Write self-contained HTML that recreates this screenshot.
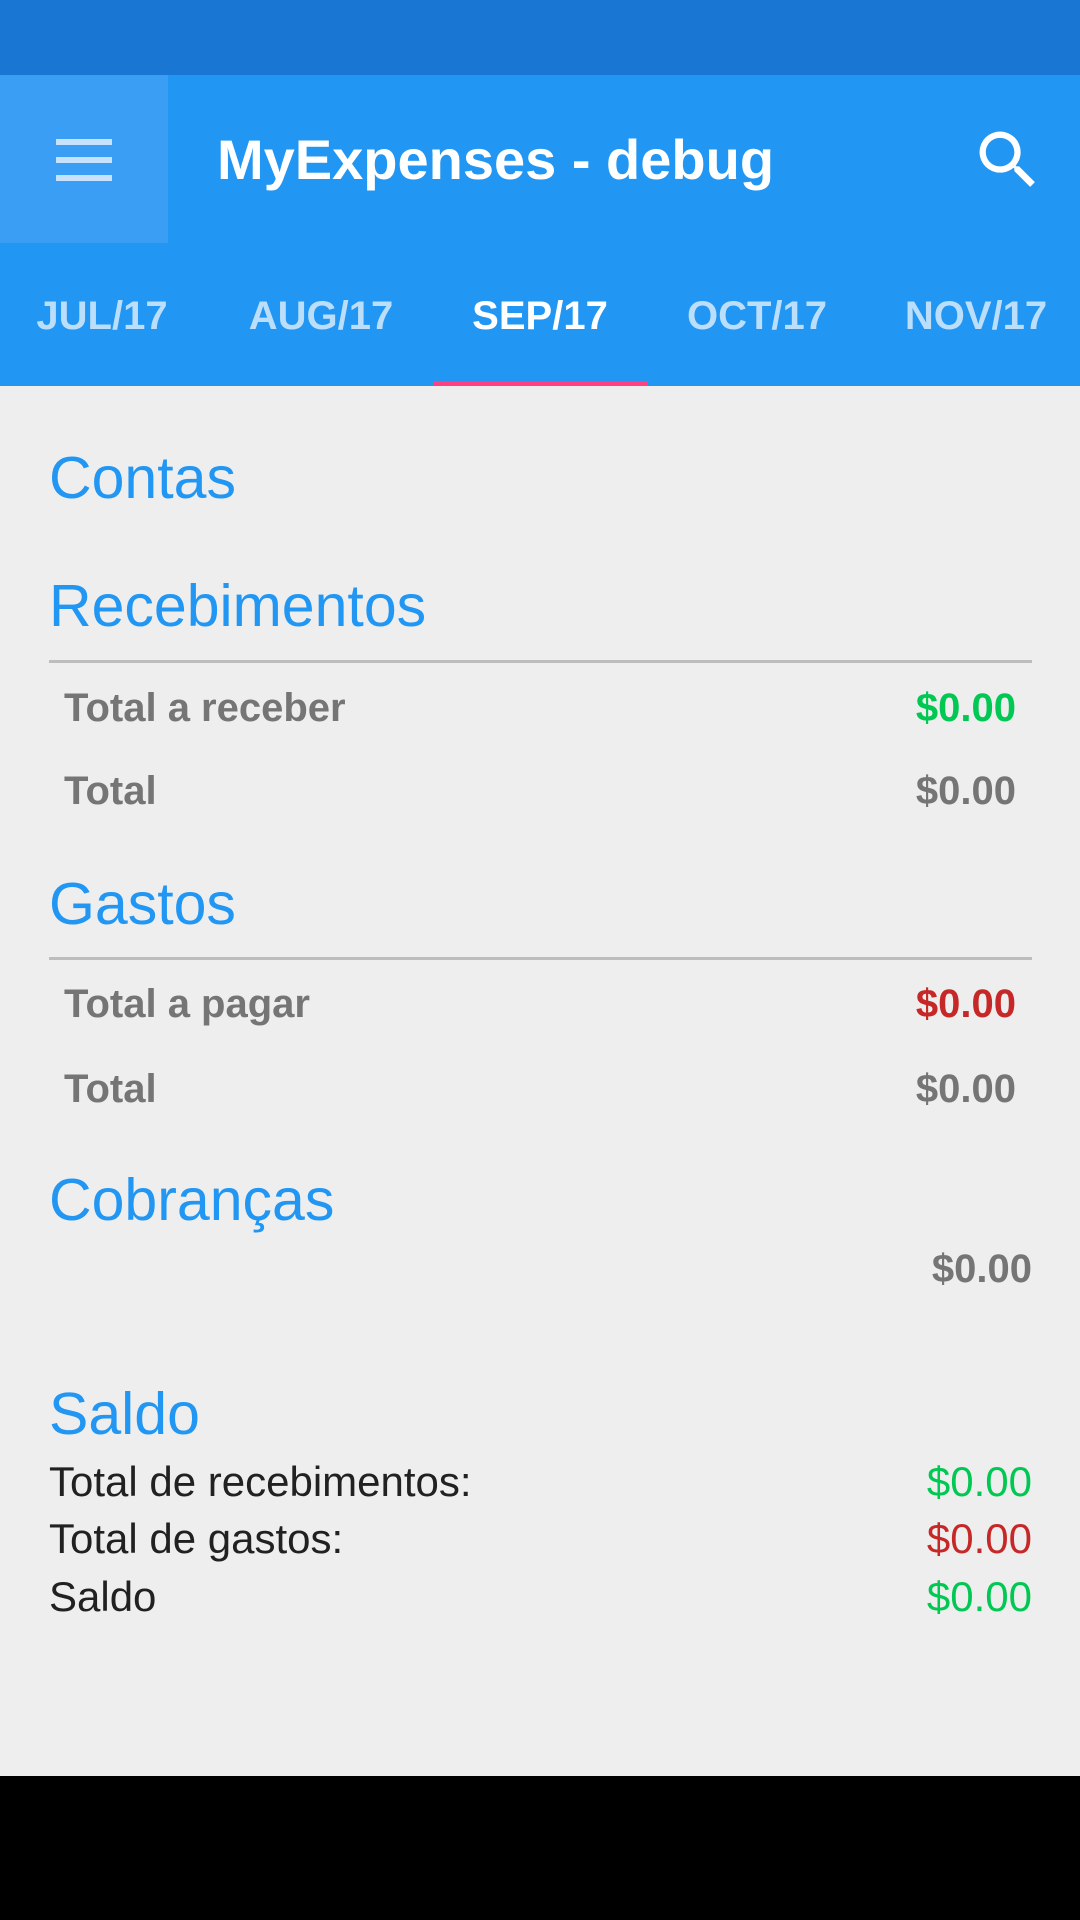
<!DOCTYPE html>
<html><head><meta charset="utf-8"><style>
*{margin:0;padding:0;box-sizing:border-box}
body{width:1080px;height:1920px;position:relative;overflow:hidden;background:#eeeeee;font-family:"Liberation Sans",sans-serif}
.a{position:absolute;white-space:nowrap}
.h{left:49px;font-size:59px;color:#2196f3;height:70px;line-height:70px}
.r{font-size:40px;font-weight:bold;color:#757575;height:50px;line-height:50px}
.s{font-size:42px;color:#212121;height:50px;line-height:50px}
.line{position:absolute;left:49px;width:983px;height:3px;background:#bdbdbd}
.tab{position:absolute;top:291px;height:50px;line-height:50px;font-size:40px;font-weight:bold;color:#bbdefb;text-align:center;width:200px}
</style></head><body>
<div class="a" style="left:0;top:0;width:1080px;height:75px;background:#1976d2"></div>
<div class="a" style="left:0;top:75px;width:1080px;height:311px;background:#2196f3"></div>
<div class="a" style="left:0;top:75px;width:168px;height:168px;background:#3a9ff4"></div>
<div class="a" style="left:56px;top:139px;width:56px;height:6px;background:#c6e2fc"></div>
<div class="a" style="left:56px;top:157px;width:56px;height:6px;background:#c6e2fc"></div>
<div class="a" style="left:56px;top:175px;width:56px;height:6px;background:#c6e2fc"></div>
<div class="a" style="left:217px;top:125px;height:70px;line-height:70px;font-size:56px;font-weight:bold;color:#fff">MyExpenses - debug</div>
<svg class="a" style="left:970px;top:122px" width="76" height="76" viewBox="0 0 24 24"><path fill="#fff" d="M15.5 14h-.79l-.28-.27A6.47 6.47 0 0 0 16 9.5 6.5 6.5 0 1 0 9.5 16c1.61 0 3.09-.59 4.230-1.57l.27.28v.79l5 4.99L20.49 19l-4.99-5zm-6 0C7.01 14 5 11.99 5 9.5S7.01 5 9.5 5 14 7.01 14 9.5 11.99 14 9.5 14z"/></svg>
<div class="tab" style="left:2px">JUL/17</div>
<div class="tab" style="left:221px">AUG/17</div>
<div class="tab" style="left:440px;color:#fff">SEP/17</div>
<div class="tab" style="left:657px">OCT/17</div>
<div class="tab" style="left:876px">NOV/17</div>
<div class="a" style="left:433px;top:381px;width:215px;height:5px;background:#ff4081"></div>

<div class="a h" style="top:443px">Contas</div>
<div class="a h" style="top:571px">Recebimentos</div>
<div class="line" style="top:660px"></div>
<div class="a r" style="left:64px;top:683px">Total a receber</div>
<div class="a r" style="right:64px;top:683px;color:#00c853">$0.00</div>
<div class="a r" style="left:64px;top:766px">Total</div>
<div class="a r" style="right:64px;top:766px">$0.00</div>
<div class="a h" style="top:869px">Gastos</div>
<div class="line" style="top:957px"></div>
<div class="a r" style="left:64px;top:979px">Total a pagar</div>
<div class="a r" style="right:64px;top:979px;color:#c62828">$0.00</div>
<div class="a r" style="left:64px;top:1064px">Total</div>
<div class="a r" style="right:64px;top:1064px">$0.00</div>
<div class="a h" style="top:1165px">Cobranças</div>
<div class="a r" style="right:48px;top:1244px">$0.00</div>
<div class="a h" style="top:1379px">Saldo</div>
<div class="a s" style="left:49px;top:1457px">Total de recebimentos:</div>
<div class="a s" style="right:48px;top:1457px;color:#00c853">$0.00</div>
<div class="a s" style="left:49px;top:1514px">Total de gastos:</div>
<div class="a s" style="right:48px;top:1514px;color:#c62828">$0.00</div>
<div class="a s" style="left:49px;top:1572px">Saldo</div>
<div class="a s" style="right:48px;top:1572px;color:#00c853">$0.00</div>
<div class="a" style="left:0;top:1776px;width:1080px;height:144px;background:#000"></div>
</body></html>
